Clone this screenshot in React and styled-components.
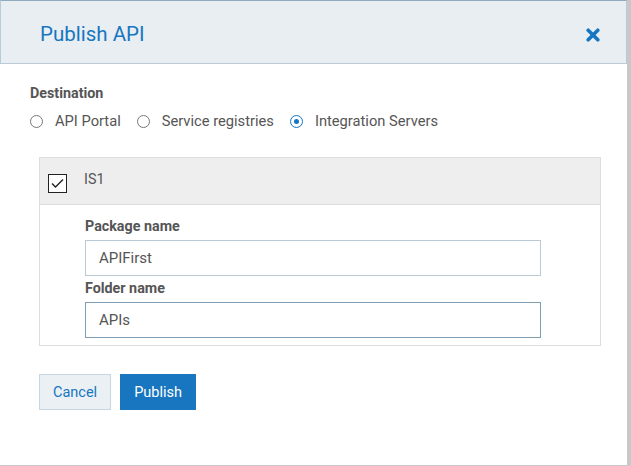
import React from 'react';
import styled, { createGlobalStyle } from 'styled-components';

const GlobalStyle = createGlobalStyle`
  body {
    margin: 0;
    background: #c8c8c8;
    font-family: Roboto, "Liberation Sans", Arial, sans-serif;
  }
`;

const Dialog = styled.div`
  width: 627px;
  height: 465px;
  background: #ffffff;
  border-right: 1px solid #c9c9c9;
  border-bottom: 1px solid #c9c9c9;
  display: flex;
  flex-direction: column;
`;

const Header = styled.div`
  box-sizing: border-box;
  height: 64px;
  background: #e9eef3;
  border: 1px solid #b9cad8;
  border-top-color: #8fa9bf;
  display: flex;
  align-items: center;
  justify-content: space-between;
  padding: 4px 26px 0 39px;
`;

const Title = styled.h1`
  margin: 0;
  font-size: 20.5px;
  font-weight: 400;
  color: #1776bf;
`;

const CloseButton = styled.button`
  border: 0;
  background: none;
  padding: 0;
  margin-top: 2px;
  display: flex;
  cursor: pointer;
`;

const Body = styled.div`
  padding: 20px 30px 0 30px;
`;

const SectionLabel = styled.div`
  font-size: 14.3px;
  line-height: 18px;
  font-weight: 700;
  color: #555555;
`;

const RadioGroup = styled.div`
  display: flex;
  align-items: center;
  gap: 16px;
  margin-top: 10px;
  height: 18px;
`;

const RadioOption = styled.label`
  display: flex;
  align-items: center;
  gap: 12px;
  font-size: 14.7px;
  color: #555555;
`;

const RadioCircle = styled.span`
  box-sizing: border-box;
  width: 13px;
  height: 13px;
  border-radius: 50%;
  border: 1px solid ${(p) => (p.checked ? '#1776bf' : '#777777')};
  display: flex;
  align-items: center;
  justify-content: center;
  &::after {
    content: '';
    width: 5px;
    height: 5px;
    border-radius: 50%;
    background: ${(p) => (p.checked ? '#1776bf' : 'transparent')};
  }
`;

const Panel = styled.div`
  margin: 27px 0 0 9px;
  width: 560px;
  border: 1px solid #dddddd;
`;

const PanelHeader = styled.div`
  height: 46px;
  background: #eeeeee;
  border-bottom: 1px solid #dddddd;
  display: flex;
  align-items: center;
  padding-left: 8px;
  gap: 17px;
  font-size: 14.3px;
  color: #555555;
`;

const Checkbox = styled.span`
  width: 17px;
  height: 17px;
  border: 1px solid #222222;
  background: #ffffff;
  display: flex;
  align-items: center;
  justify-content: center;
  margin-top: 4px;
`;

const PanelHeaderText = styled.span`
  margin-bottom: 4px;
`;

const PanelBody = styled.div`
  padding: 12px 0 7px 45px;
`;

const FieldLabel = styled.div`
  font-size: 14.3px;
  line-height: 18px;
  font-weight: 700;
  color: #555555;
  margin-top: ${(p) => p.gap || 0}px;
`;

const TextInput = styled.input`
  display: block;
  box-sizing: border-box;
  width: 456px;
  height: 36px;
  margin-top: 5px;
  padding: 0 13px;
  border: 1px solid ${(p) => (p.focused ? '#7f9db3' : '#b9c9d6')};
  font-family: Roboto, "Liberation Sans", Arial, sans-serif;
  font-size: 15px;
  color: #555555;
  outline: none;
`;

const Actions = styled.div`
  display: flex;
  gap: 9px;
  margin: 28px 0 0 9px;
`;

const Button = styled.button`
  height: 36px;
  padding: 0 13px;
  font-family: Roboto, "Liberation Sans", Arial, sans-serif;
  font-size: 14.5px;
  border: 1px solid ${(p) => (p.primary ? '#1776bf' : '#c5d8e1')};
  background: ${(p) => (p.primary ? '#1776bf' : '#ebf0f4')};
  color: ${(p) => (p.primary ? '#ffffff' : '#1776bf')};
  cursor: pointer;
`;

const CloseIcon = () => (
  <svg width="14" height="14" viewBox="0 0 14 14">
    <path
      d="M2.2 2.2 L11.8 11.8 M11.8 2.2 L2.2 11.8"
      stroke="#1776bf"
      strokeWidth="3.6"
      strokeLinecap="round"
    />
  </svg>
);

const CheckIcon = () => (
  <svg width="13" height="11" viewBox="0 0 13 11">
    <polyline points="1,5.5 4.5,9 12,1.5" fill="none" stroke="#222" strokeWidth="1.4" />
  </svg>
);

const destinations = [
  { label: 'API Portal', checked: false },
  { label: 'Service registries', checked: false },
  { label: 'Integration Servers', checked: true },
];

export default function App() {
  return (
    <>
      <GlobalStyle />
      <Dialog>
        <Header>
          <Title>Publish API</Title>
          <CloseButton aria-label="Close">
            <CloseIcon />
          </CloseButton>
        </Header>
        <Body>
          <SectionLabel>Destination</SectionLabel>
          <RadioGroup>
            {destinations.map((d) => (
              <RadioOption key={d.label}>
                <RadioCircle checked={d.checked} />
                {d.label}
              </RadioOption>
            ))}
          </RadioGroup>
          <Panel>
            <PanelHeader>
              <Checkbox>
                <CheckIcon />
              </Checkbox>
              <PanelHeaderText>IS1</PanelHeaderText>
            </PanelHeader>
            <PanelBody>
              <FieldLabel>Package name</FieldLabel>
              <TextInput defaultValue="APIFirst" />
              <FieldLabel gap={3}>Folder name</FieldLabel>
              <TextInput defaultValue="APIs" focused />
            </PanelBody>
          </Panel>
          <Actions>
            <Button>Cancel</Button>
            <Button primary>Publish</Button>
          </Actions>
        </Body>
      </Dialog>
    </>
  );
}
